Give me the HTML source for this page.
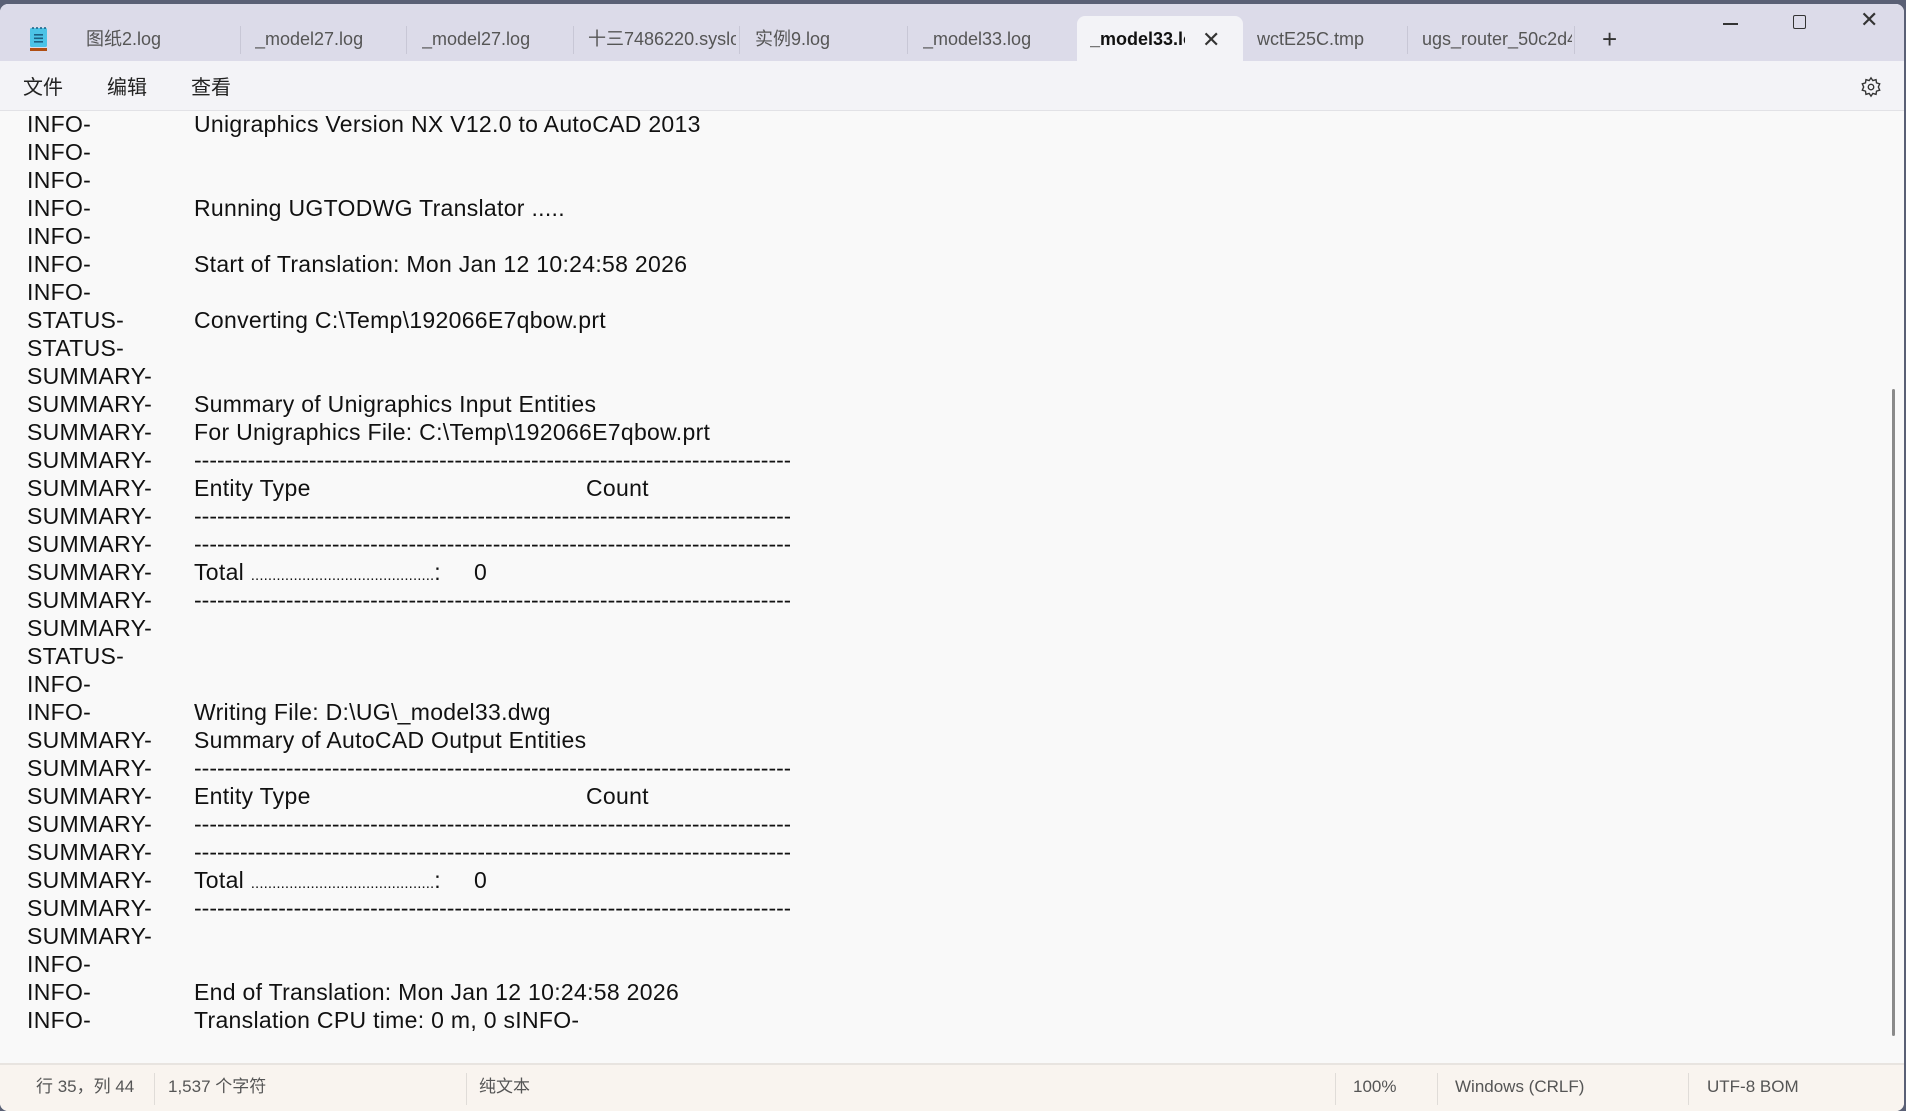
<!DOCTYPE html>
<html><head><meta charset="utf-8"><style>
*{margin:0;padding:0;box-sizing:border-box}
html,body{width:1906px;height:1111px;overflow:hidden;background:#5a6075}
body{font-family:"Liberation Sans","Noto Sans CJK SC",sans-serif;position:relative}
.win{position:absolute;left:0;top:4px;width:1904px;height:1107px;border-radius:8px;overflow:hidden;background:#f9f9f9}
.tabbar{position:absolute;left:0;top:0;width:100%;height:57px;background:#dcdbe9}
.tab{position:absolute;top:14px;font-size:18px;color:#555;height:43px;line-height:43px;white-space:nowrap;overflow:hidden}
.sep{position:absolute;top:22px;width:1px;height:28px;background:#c8c7d6}
.active{position:absolute;left:1077px;top:12px;width:166px;height:47px;background:#f3f3f7;border-radius:8px 8px 0 0}
.menu{position:absolute;left:0;top:57px;width:100%;height:50px;background:#f3f3f7;border-bottom:1px solid #e2e2e6}
.menu span{position:absolute;top:13px;font-size:20px;line-height:28px;color:#222}
.txt{position:absolute;left:0;top:102px;width:100%}
.ln{position:absolute;height:28px;font-size:23px;letter-spacing:0.3px;line-height:28px;color:#111;white-space:pre}
.c1{left:27px}.c2{left:194px}
.dash{display:inline-block;width:596px;overflow:hidden;vertical-align:top;letter-spacing:0}
.dots{font-size:15px;letter-spacing:0.1px}
.status{position:absolute;left:0;top:1059px;width:100%;height:48px;background:#f9f4ef;border-top:2px solid #e8e4e0}
.status span{position:absolute;top:10px;font-size:17px;line-height:24px;color:#555}
.ss{position:absolute;top:8px;width:1px;height:32px;background:#e0dcd8}
</style></head><body>
<div class="win">
<div class="tabbar">
<svg style="position:absolute;left:29px;top:22px" width="19" height="26" viewBox="0 0 19 26"><rect x="1" y="2" width="17" height="19" rx="1.5" fill="#4cc3e6"/><rect x="1" y="22" width="17" height="3" fill="#b04e12"/><rect x="5" y="8" width="9" height="1.6" fill="#1c5f82"/><rect x="5" y="11.5" width="9" height="1.6" fill="#1c5f82"/><rect x="5" y="15" width="9" height="1.6" fill="#1c5f82"/><circle cx="4" cy="2" r="1" fill="#1c5f82"/><circle cx="8" cy="2" r="1" fill="#1c5f82"/><circle cx="12" cy="2" r="1" fill="#1c5f82"/><circle cx="16" cy="2" r="1" fill="#1c5f82"/></svg>
<div class="tab" style="left:86px">图纸2.log</div>
<div class="sep" style="left:240px"></div>
<div class="tab" style="left:255px">_model27.log</div>
<div class="sep" style="left:406px"></div>
<div class="tab" style="left:422px">_model27.log</div>
<div class="sep" style="left:573px"></div>
<div class="tab" style="left:588px;width:148px">十三7486220.syslog</div>
<div class="sep" style="left:739px"></div>
<div class="tab" style="left:755px">实例9.log</div>
<div class="sep" style="left:907px"></div>
<div class="tab" style="left:923px">_model33.log</div>
<div class="active"></div>
<div class="tab" style="left:1090px;width:95px;color:#111;font-weight:bold">_model33.log</div>
<div class="tab" style="left:1202px;color:#333;font-size:22px">✕</div>
<div class="tab" style="left:1257px">wctE25C.tmp</div>
<div class="sep" style="left:1407px"></div>
<div class="tab" style="left:1422px;width:150px">ugs_router_50c2d4</div>
<div class="sep" style="left:1574px"></div>
<div class="tab" style="left:1602px;font-size:26px;color:#333">+</div>
<div style="position:absolute;left:1723px;top:19px;width:15px;height:1.5px;background:#333"></div>
<div style="position:absolute;left:1793px;top:11px;width:13px;height:14px;border:1.5px solid #333;border-radius:2px"></div>
<div style="position:absolute;left:1860px;top:3px;font-size:22px;color:#333">✕</div>
</div>
<div class="menu"><span style="left:23px">文件</span><span style="left:107px">编辑</span><span style="left:191px">查看</span>
<svg style="position:absolute;left:1860px;top:15px" width="22" height="22" viewBox="0 0 24 24" fill="none" stroke="#333" stroke-width="1.5"><circle cx="12" cy="12" r="3"/><path d="M12 2l2 3 3.5-1 .5 3.5 3.5 1-1.5 3.5 1.5 3.5-3.5 1-.5 3.5-3.5-1-2 3-2-3-3.5 1-.5-3.5-3.5-1L4 12 2.5 8.5 6 7.5 6.5 4 10 5z"/></svg></div>
<div class="txt">
<div class="ln c1" style="top:4px">INFO-</div><div class="ln c2" style="top:4px">Unigraphics Version NX V12.0 to AutoCAD 2013</div>
<div class="ln c1" style="top:32px">INFO-</div>
<div class="ln c1" style="top:60px">INFO-</div>
<div class="ln c1" style="top:88px">INFO-</div><div class="ln c2" style="top:88px">Running UGTODWG Translator .....</div>
<div class="ln c1" style="top:116px">INFO-</div>
<div class="ln c1" style="top:144px">INFO-</div><div class="ln c2" style="top:144px">Start of Translation: Mon Jan 12 10:24:58 2026</div>
<div class="ln c1" style="top:172px">INFO-</div>
<div class="ln c1" style="top:200px">STATUS-</div><div class="ln c2" style="top:200px">Converting C:\Temp\192066E7qbow.prt</div>
<div class="ln c1" style="top:228px">STATUS-</div>
<div class="ln c1" style="top:256px">SUMMARY-</div>
<div class="ln c1" style="top:284px">SUMMARY-</div><div class="ln c2" style="top:284px">Summary of Unigraphics Input Entities</div>
<div class="ln c1" style="top:312px">SUMMARY-</div><div class="ln c2" style="top:312px">For Unigraphics File: C:\Temp\192066E7qbow.prt</div>
<div class="ln c1" style="top:340px">SUMMARY-</div><div class="ln c2" style="top:340px"><span class="dash">----------------------------------------------------------------------------------------------</span></div>
<div class="ln c1" style="top:368px">SUMMARY-</div><div class="ln c2" style="top:368px">Entity Type</div><div class="ln" style="top:368px;left:586px">Count</div>
<div class="ln c1" style="top:396px">SUMMARY-</div><div class="ln c2" style="top:396px"><span class="dash">----------------------------------------------------------------------------------------------</span></div>
<div class="ln c1" style="top:424px">SUMMARY-</div><div class="ln c2" style="top:424px"><span class="dash">----------------------------------------------------------------------------------------------</span></div>
<div class="ln c1" style="top:452px">SUMMARY-</div><div class="ln c2" style="top:452px">Total <span class="dots">...........................................</span>:</div><div class="ln" style="top:452px;left:474px">0</div>
<div class="ln c1" style="top:480px">SUMMARY-</div><div class="ln c2" style="top:480px"><span class="dash">----------------------------------------------------------------------------------------------</span></div>
<div class="ln c1" style="top:508px">SUMMARY-</div>
<div class="ln c1" style="top:536px">STATUS-</div>
<div class="ln c1" style="top:564px">INFO-</div>
<div class="ln c1" style="top:592px">INFO-</div><div class="ln c2" style="top:592px">Writing File: D:\UG\_model33.dwg</div>
<div class="ln c1" style="top:620px">SUMMARY-</div><div class="ln c2" style="top:620px">Summary of AutoCAD Output Entities</div>
<div class="ln c1" style="top:648px">SUMMARY-</div><div class="ln c2" style="top:648px"><span class="dash">----------------------------------------------------------------------------------------------</span></div>
<div class="ln c1" style="top:676px">SUMMARY-</div><div class="ln c2" style="top:676px">Entity Type</div><div class="ln" style="top:676px;left:586px">Count</div>
<div class="ln c1" style="top:704px">SUMMARY-</div><div class="ln c2" style="top:704px"><span class="dash">----------------------------------------------------------------------------------------------</span></div>
<div class="ln c1" style="top:732px">SUMMARY-</div><div class="ln c2" style="top:732px"><span class="dash">----------------------------------------------------------------------------------------------</span></div>
<div class="ln c1" style="top:760px">SUMMARY-</div><div class="ln c2" style="top:760px">Total <span class="dots">...........................................</span>:</div><div class="ln" style="top:760px;left:474px">0</div>
<div class="ln c1" style="top:788px">SUMMARY-</div><div class="ln c2" style="top:788px"><span class="dash">----------------------------------------------------------------------------------------------</span></div>
<div class="ln c1" style="top:816px">SUMMARY-</div>
<div class="ln c1" style="top:844px">INFO-</div>
<div class="ln c1" style="top:872px">INFO-</div><div class="ln c2" style="top:872px">End of Translation: Mon Jan 12 10:24:58 2026</div>
<div class="ln c1" style="top:900px">INFO-</div><div class="ln c2" style="top:900px">Translation CPU time: 0 m, 0 sINFO-</div>
</div>
<div style="position:absolute;left:1892px;top:385px;width:3px;height:647px;background:#8a8a8a;border-radius:2px"></div>
<div class="status">
<span style="left:36px">行 35，列 44</span><div class="ss" style="left:154px"></div>
<span style="left:168px">1,537 个字符</span><div class="ss" style="left:466px"></div>
<span style="left:479px">纯文本</span><div class="ss" style="left:1335px"></div>
<span style="left:1353px">100%</span><div class="ss" style="left:1437px"></div>
<span style="left:1455px">Windows (CRLF)</span><div class="ss" style="left:1688px"></div>
<span style="left:1707px">UTF-8 BOM</span>
</div>
</div>
</body></html>
